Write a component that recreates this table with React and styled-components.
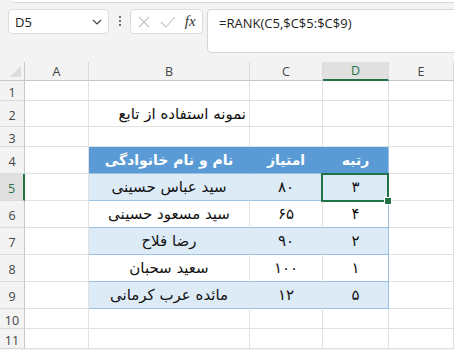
import styled, { createGlobalStyle } from "styled-components";

const GlobalStyle = createGlobalStyle`
  html, body {
    margin: 0;
    padding: 0;
    background: #f3f3f3;
    overflow: hidden;
  }
`;

const COLS = [25, 64, 161, 73, 66, 65];
const ROWS = [19, 20, 26, 20, 27, 27, 27, 27, 27, 27, 20, 20];
const GREEN = "#217346";

const Page = styled.div`
  width: 454px;
  height: 350px;
  background: #f3f3f3;
  display: flex;
  flex-direction: column;
  font-family: "Open Sans", "Noto Sans", sans-serif;
`;

const RibbonEdge = styled.div`
  height: 2px;
  margin: 0 0 0 12px;
  background: #fff;
  border-bottom: 1px solid #dadada;
  border-bottom-left-radius: 4px;
`;

const FormulaRow = styled.div`
  display: flex;
  align-items: flex-start;
  padding: 6px 0 0 8px;
  height: 45px;
`;

const NameBox = styled.div`
  width: 87px;
  height: 23px;
  background: #fff;
  border: 1px solid #dcdcdc;
  border-radius: 4px;
  display: flex;
  align-items: center;
  justify-content: space-between;
  padding: 0 6px;
  box-sizing: content-box;
  font-size: 13px;
  color: #222;
`;

const Dots = styled.div`
  width: 21px;
  display: flex;
  flex-direction: column;
  align-items: center;
  gap: 2px;
  padding-top: 7px;
  span {
    width: 2px;
    height: 2px;
    background: #444;
    border-radius: 1px;
  }
`;

const FxBox = styled.div`
  width: 67px;
  height: 23px;
  background: #fff;
  border: 1px solid #dcdcdc;
  border-radius: 4px;
  display: flex;
  align-items: center;
  justify-content: space-around;
  padding: 0 2px;
  box-sizing: content-box;
`;

const Fx = styled.span`
  font-family: "Liberation Serif", "DejaVu Serif", serif;
  font-style: italic;
  font-size: 15px;
  color: #333;
  line-height: 1;
`;

const FormulaBox = styled.div`
  flex: 1;
  height: 44px;
  margin-left: 4px;
  margin-right: -6px;
  background: #fff;
  border: 1px solid #d6d6d6;
  border-radius: 4px;
  font-size: 13px;
  color: #222;
  padding: 4px 0 0 11px;
  box-sizing: border-box;
`;

const Sheet = styled.div`
  position: relative;
  margin-top: 8px;
  display: grid;
  grid-template-columns: ${COLS.map((c) => c + "px").join(" ")};
  grid-template-rows: ${ROWS.map((r) => r + "px").join(" ")};
  background: #fff;
`;

const Corner = styled.div`
  background: #f3f3f3;
  border-right: 1px solid #c8c8c8;
  border-bottom: 1px solid #c8c8c8;
  position: relative;
  &::after {
    content: "";
    position: absolute;
    right: 3px;
    bottom: 3px;
    border-style: solid;
    border-width: 0 0 11px 11px;
    border-color: transparent transparent #dcdcdc transparent;
  }
`;

const ColHead = styled.div`
  background: ${(p) => (p.$sel ? "#e0e0e0" : "#f3f3f3")};
  color: ${(p) => (p.$sel ? GREEN : "#444")};
  border-right: 1px solid #dadada;
  border-bottom: ${(p) => (p.$sel ? `2px solid ${GREEN}` : "1px solid #c8c8c8")};
  display: flex;
  align-items: center;
  justify-content: center;
  font-size: 12.5px;
`;

const RowHead = styled.div`
  background: ${(p) => (p.$sel ? "#e0e0e0" : "#f3f3f3")};
  color: ${(p) => (p.$sel ? GREEN : "#444")};
  border-right: ${(p) => (p.$sel ? `2px solid ${GREEN}` : "1px solid #c8c8c8")};
  border-bottom: 1px solid #dadada;
  display: flex;
  align-items: center;
  justify-content: center;
  padding-top: 3px;
  box-sizing: border-box;
  font-size: 12.5px;
`;

const Cell = styled.div`
  border-right: 1px solid ${(p) => (p.$edge ? "#9bc2e6" : p.$fill ? "transparent" : "#e1e1e1")};
  border-bottom: 1px solid ${(p) => (p.$table ? "#9bc2e6" : "#e1e1e1")};
  background: ${(p) => p.$fill || "transparent"};
  color: ${(p) => (p.$head ? "#fff" : "#111")};
  font-weight: ${(p) => (p.$head ? "bold" : "normal")};
  font-family: "DejaVu Sans", sans-serif;
  font-size: ${(p) => (p.$head ? "14px" : "15px")};
  direction: rtl;
  display: flex;
  align-items: center;
  justify-content: ${(p) => (p.$align === "right" ? "flex-start" : "center")};
  padding: 0 3px;
  white-space: nowrap;
  overflow: visible;
  box-sizing: border-box;
`;

const Selection = styled.div`
  position: absolute;
  left: 321px;
  top: 111px;
  width: 68px;
  height: 29px;
  border: 2px solid ${GREEN};
  box-sizing: border-box;
  pointer-events: none;
  &::after {
    content: "";
    position: absolute;
    right: -5px;
    bottom: -5px;
    width: 6px;
    height: 6px;
    background: ${GREEN};
    border: 1px solid #fff;
  }
`;

const table = [
  ["نام و نام خانوادگی", "امتیاز", "رتبه"],
  ["سید عباس حسینی", "۸۰", "۳"],
  ["سید مسعود حسینی", "۶۵", "۴"],
  ["رضا فلاح", "۹۰", "۲"],
  ["سعید سحبان", "۱۰۰", "۱"],
  ["مائده عرب کرمانی", "۱۲", "۵"],
];

const Chevron = () => (
  <svg width="10" height="6" viewBox="0 0 10 6">
    <path d="M1 1l4 4 4-4" fill="none" stroke="#444" strokeWidth="1.2" />
  </svg>
);

const CrossIcon = () => (
  <svg width="14" height="14" viewBox="0 0 14 14">
    <path d="M2 2l10 10M12 2L2 12" stroke="#c4c4c4" strokeWidth="1.1" />
  </svg>
);

const CheckIcon = () => (
  <svg width="16" height="12" viewBox="0 0 16 12">
    <path d="M1 6l5 5 9-10" fill="none" stroke="#c4c4c4" strokeWidth="1.1" />
  </svg>
);

const App = () => {
  const cells = [];
  for (let r = 1; r <= 11; r++) {
    cells.push(
      <RowHead key={`h${r}`} $sel={r === 5}>
        {r}
      </RowHead>
    );
    for (let c = 0; c < 5; c++) {
      const inTable = r >= 4 && r <= 9 && c >= 1 && c <= 3;
      let text = "";
      let fill;
      let align;
      if (r === 2 && c === 1) {
        text = "نمونه استفاده از تابع";
        align = "right";
      }
      if (inTable) {
        text = table[r - 4][c - 1];
        if (r === 4) fill = "#5b9bd5";
        else if (r % 2 === 1) fill = "#ddebf7";
      }
      cells.push(
        <Cell
          key={`${r}-${c}`}
          $fill={fill}
          $table={inTable}
          $head={inTable && r === 4}
          $edge={inTable && c === 3}
          $align={align}
        >
          {text}
        </Cell>
      );
    }
  }

  return (
    <Page>
      <GlobalStyle />
      <RibbonEdge />
      <FormulaRow>
        <NameBox>
          <span>D5</span>
          <Chevron />
        </NameBox>
        <Dots>
          <span />
          <span />
          <span />
        </Dots>
        <FxBox>
          <CrossIcon />
          <CheckIcon />
          <Fx>fx</Fx>
        </FxBox>
        <FormulaBox>=RANK(C5,$C$5:$C$9)</FormulaBox>
      </FormulaRow>
      <Sheet>
        <Corner />
        {["A", "B", "C", "D", "E"].map((l) => (
          <ColHead key={l} $sel={l === "D"}>
            {l}
          </ColHead>
        ))}
        {cells}
        <Selection />
      </Sheet>
    </Page>
  );
};

export default App;
